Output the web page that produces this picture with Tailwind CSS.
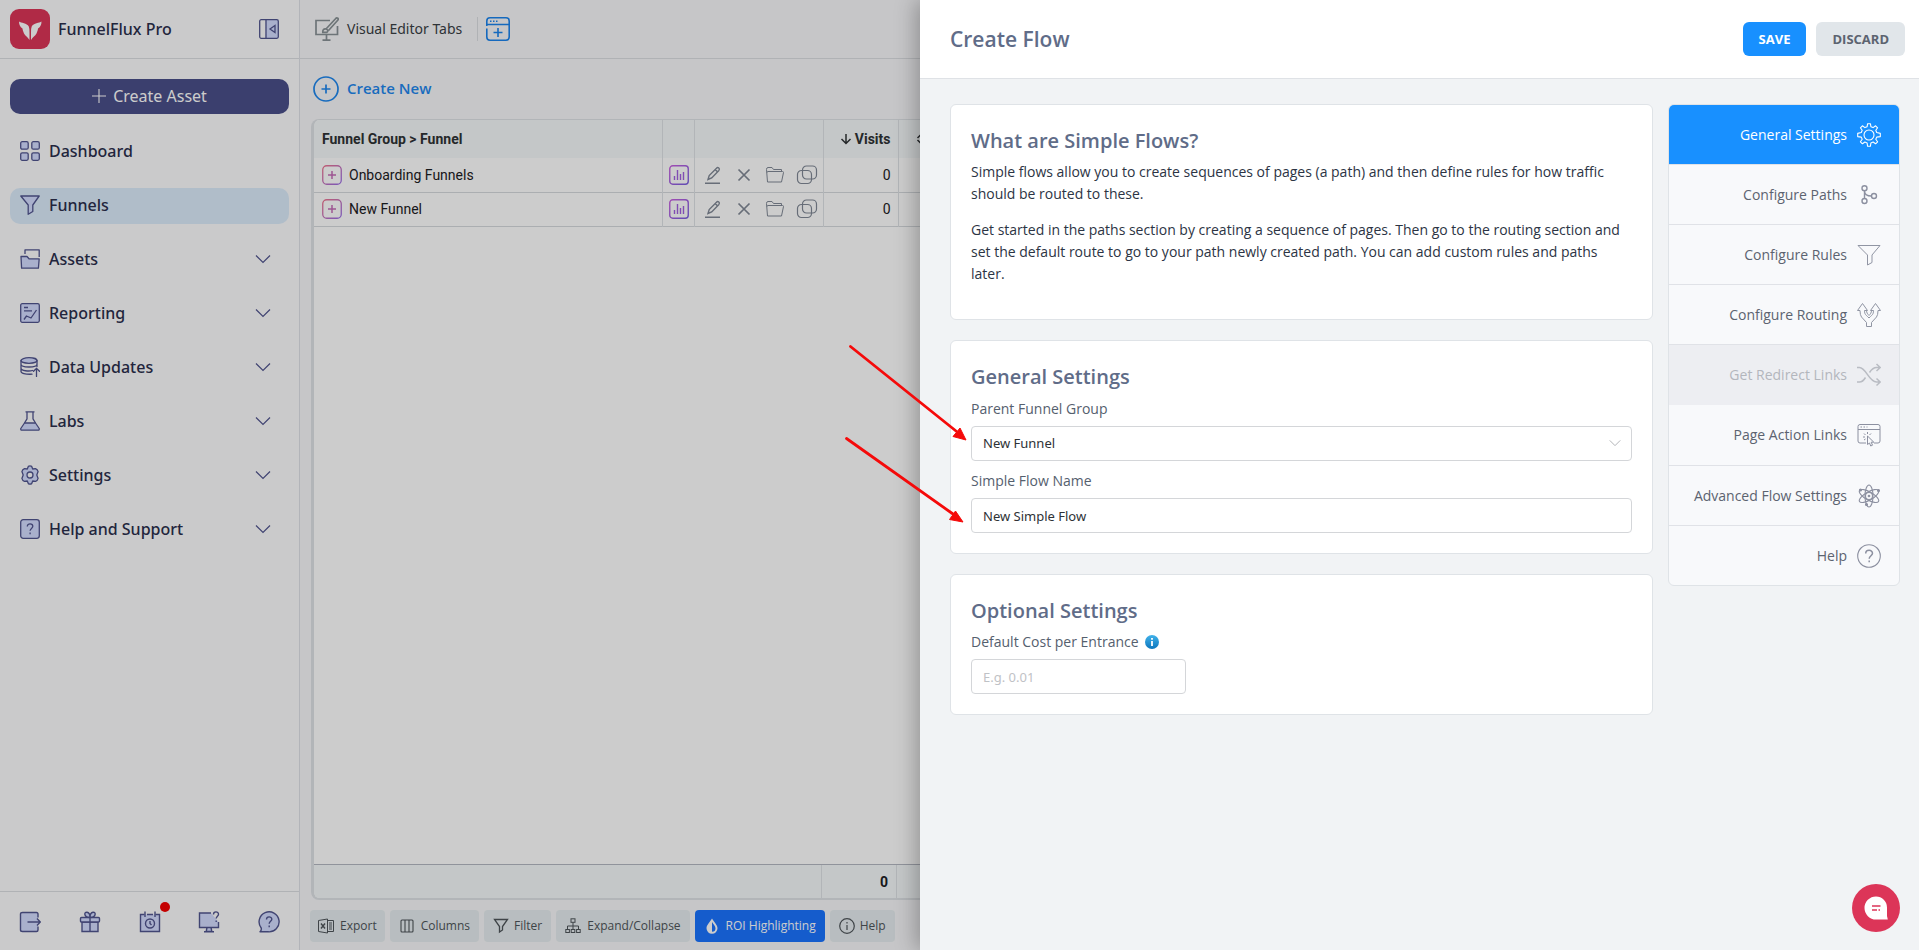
<!DOCTYPE html>
<html lang="en">
<head>
<meta charset="utf-8">
<title>FunnelFlux Pro – Create Flow</title>
<script src="https://cdn.jsdelivr.net/npm/@tailwindcss/browser@4"></script>
</head>
<body class="relative flex h-screen overflow-hidden bg-[#f8f8fa] font-['Open_Sans',sans-serif] text-sm">

<!-- Shared icon symbols -->
<svg class="absolute size-0" aria-hidden="true">
  <symbol id="chev" viewBox="0 0 16 16"><path d="M1 4.5l7 7 7-7" fill="none" stroke="currentColor" stroke-width="1.2"/></symbol>
  <linearGradient id="pink" x1="0" y1="0" x2="1" y2="1"><stop offset="0" stop-color="#f0758f"/><stop offset="1" stop-color="#9a6fe8"/></linearGradient>
  <linearGradient id="violet" x1="0" y1="0" x2="1" y2="1"><stop offset="0" stop-color="#c961e0"/><stop offset="1" stop-color="#7a60e0"/></linearGradient>
  <symbol id="plusbox" viewBox="0 0 20 20"><rect x=".75" y=".75" width="18.500" height="18.500" rx="4" fill="none" stroke="url(#pink)" stroke-width="1.3"/><path d="M10 6v8M6 10h8" stroke="#c66cb8" stroke-width="1.5"/></symbol>
  <symbol id="chart" viewBox="0 0 20 20"><rect x=".75" y=".75" width="18.500" height="18.500" rx="3" fill="none" stroke="url(#violet)" stroke-width="1.400"/><path d="M5.500 15v-4M8.500 15V5M11.500 15V9M14.500 15V7" stroke="#a261e0" stroke-width="1.400"/></symbol>
  <symbol id="edit" viewBox="0 0 20 20"><path d="M2 18.300h15" stroke="currentColor" stroke-width="1.400"/><path d="M5 14.500l1.200-4L13.500 3.200a1.600 1.600 0 012.400 2.200L8.700 12.900zM12.200 4.600l2.400 2.300" fill="none" stroke="currentColor" stroke-width="1.400"/></symbol>
  <symbol id="cross" viewBox="0 0 20 20"><path d="M4.500 4.500l11 11M15.500 4.500l-11 11" stroke="currentColor" stroke-width="1.700"/></symbol>
  <symbol id="folder" viewBox="0 0 20 20"><path d="M2.500 17L1.500 4.500q0-2 1.500-2h4l1.500 2h8v2M2.500 17h14l2-9.500q0-1-1-1H3q-1 0-1 1" fill="none" stroke="currentColor" stroke-width="1"/></symbol>
  <symbol id="copy" viewBox="0 0 22 20"><rect x="6.500" y="1" width="14" height="13" rx="4" fill="none" stroke="currentColor" stroke-width="1.200"/><rect x="1.500" y="5.500" width="14" height="13" rx="4" fill="none" stroke="currentColor" stroke-width="1.200"/></symbol>
</svg>

<aside class="flex w-[300px] shrink-0 flex-col border-r border-[#dfe1e8] bg-[#fdfdfe] font-['Noto_Sans',sans-serif] text-base font-medium text-[#2b2f4d]">
  <header class="flex h-[59px] shrink-0 items-center border-b border-[#dcdfe3] pr-5 pl-2.5">
    <svg class="size-10" viewBox="0 0 40 40"><rect width="40" height="40" rx="9" fill="#dc3558"/><path d="M9 12.500c2 1.500 8 1.500 9.800 5q.7 1.500.7 6V31c-2-3-4-4-5.500-6.500C13 22 12.500 20.500 12.500 19.500 10 18 9 15.500 9 12.500zM31.500 12.500c-2 1.500-8 1.500-9.800 5q-.7 1.500-.7 6V31c2-3 4-4 5.500-6.500 1-2.500 1.500-4 1.500-5 2.500-1.500 3.500-4 3.500-7z" fill="#fff"/></svg>
    <span class="ml-2 flex-1 font-medium">FunnelFlux Pro</span>
    <button type="button" aria-label="Collapse sidebar"><svg class="block size-5" viewBox="0 0 20 20" fill="none" stroke="#51558f" stroke-width="1.300"><rect x="6.500" y=".7" width="12.800" height="18.600" fill="#d4dcff" stroke="none"/><rect x=".7" y=".7" width="18.600" height="18.600" rx="1.500"/><path d="M7 1v18M16 6.500v7l-5-3.500z"/></svg></button>
  </header>
  <div class="px-2.5 pt-5">
    <button type="button" class="flex h-[35px] w-full items-center justify-center gap-[7px] rounded-[10px] bg-[#4a4f8a] pb-0.5 font-normal text-white"><svg class="size-3.5" viewBox="0 0 14 14"><path d="M7 0v14M0 7h14" stroke="#fff" stroke-width="1.100"/></svg>Create Asset</button>
  </div>
  <nav class="flex flex-1 flex-col gap-[18px] px-2.5 pt-5">
    <a href="#" class="flex h-9 items-center gap-[9px] rounded-[10px] px-2.5 pb-0.5">
      <svg class="size-5" viewBox="0 0 20 20" fill="#d4dcff" stroke="#51558f" stroke-width="1.300"><rect x=".7" y=".7" width="7.500" height="7.500" rx="1.500"/><rect x="11.800" y=".7" width="7.500" height="7.500" rx="1.500"/><rect x=".7" y="11.800" width="7.500" height="7.500" rx="1.500"/><rect x="11.800" y="11.800" width="7.500" height="7.500" rx="1.500"/></svg>Dashboard</a>
    <a href="#" class="flex h-9 items-center gap-[9px] rounded-[10px] bg-[#ddedfc] px-2.5 pb-0.5">
      <svg class="size-5" viewBox="0 0 20 20" fill="#d4dcff" stroke="#51558f" stroke-width="1.300" stroke-linejoin="round"><path d="M.8 1h18.400l-6.400 9v6.500L8.200 19.300V10z"/></svg>Funnels</a>
    <a href="#" class="flex h-9 items-center gap-[9px] rounded-[10px] pr-[18px] pb-0.5 pl-2.5">
      <svg class="size-5" viewBox="0 0 20 20" fill="none" stroke="#51558f" stroke-width="1.300" stroke-linejoin="round"><path d="M5 5V.8h14.200V8"/><path d="M1 7.500h6l2 2.300h10.200l-.8 9.400H1.600z" fill="#d4dcff"/></svg><span class="flex-1">Assets</span><svg class="size-4 text-[#51558f]"><use href="#chev"/></svg></a>
    <a href="#" class="flex h-9 items-center gap-[9px] rounded-[10px] pr-[18px] pb-0.5 pl-2.5">
      <svg class="size-5" viewBox="0 0 20 20" fill="none" stroke="#51558f" stroke-width="1.300" stroke-linejoin="round"><rect x=".7" y=".7" width="18.600" height="18.600" rx="1.500" fill="#d4dcff"/><path d="M4 4.500h4M4 7.800h8M4 16.500l2.500-3.500 4.500 2 5.500-8"/></svg><span class="flex-1">Reporting</span><svg class="size-4 text-[#51558f]"><use href="#chev"/></svg></a>
    <a href="#" class="flex h-9 items-center gap-[9px] rounded-[10px] pr-[18px] pb-0.5 pl-2.5">
      <svg class="size-5" viewBox="0 0 20 20" fill="none" stroke="#51558f" stroke-width="1.300" stroke-linecap="round"><ellipse cx="9" cy="3.500" rx="8" ry="2.800" fill="#d4dcff"/><path d="M1 3.500v11c0 1.700 4 3 11 2.700M17 3.500v6M1 7.200c0 3.700 16 3.700 16 0M1 11c0 3 8 3.500 11.500 2.500M16.500 19.500v-8M13.500 14.300l3-3 3 3"/></svg><span class="flex-1">Data Updates</span><svg class="size-4 text-[#51558f]"><use href="#chev"/></svg></a>
    <a href="#" class="flex h-9 items-center gap-[9px] rounded-[10px] pr-[18px] pb-0.5 pl-2.5">
      <svg class="size-5" viewBox="0 0 20 20" fill="none" stroke="#51558f" stroke-width="1.300" stroke-linejoin="round"><path d="M4.500 12h11l3.700 5.500q.4 1.700-1.200 1.700H2Q.400 19.200.800 17.500z" fill="#d4dcff"/><path d="M5.500.8h9M7 .8v7L4.500 12M13 .8v7l2.500 4.200"/></svg><span class="flex-1">Labs</span><svg class="size-4 text-[#51558f]"><use href="#chev"/></svg></a>
    <a href="#" class="flex h-9 items-center gap-[9px] rounded-[10px] pr-[18px] pb-0.5 pl-2.5">
      <svg class="size-5" viewBox="0 0 20 20" fill="#d4dcff" stroke="#51558f" stroke-width="1.300" stroke-linejoin="round"><path d="M8.300 1.400q1.700-1 3.400 0l1 2.600 2.800-.4q2 .6 2.600 3L16.800 10l1.300 3.400q-.6 2.400-2.600 3l-2.800-.4-1 2.600q-1.700 1-3.400 0l-1-2.600-2.800.4q-2-.6-2.600-3L3.200 10 1.900 6.600q.6-2.400 2.600-3l2.800.4z"/><circle cx="10" cy="10" r="3" fill="#fdfdfe"/></svg><span class="flex-1">Settings</span><svg class="size-4 text-[#51558f]"><use href="#chev"/></svg></a>
    <a href="#" class="flex h-9 items-center gap-[9px] rounded-[10px] pr-[18px] pb-0.5 pl-2.5">
      <svg class="size-5" viewBox="0 0 20 20" fill="none" stroke="#51558f" stroke-width="1.300"><rect x=".7" y=".7" width="18.600" height="18.600" rx="2.500" fill="#d4dcff"/><path d="M7.300 7.500c0-3.700 5.500-3.300 5.500-.2 0 2-2.700 2.200-2.700 4.400M10.100 13.500v1.800"/></svg><span class="flex-1">Help and Support</span><svg class="size-4 text-[#51558f]"><use href="#chev"/></svg></a>
  </nav>
  <footer class="flex h-[59px] shrink-0 items-center justify-between border-t border-[#dcdfe3] px-[19px] pt-0.5">
    <button type="button" aria-label="Log out"><svg class="block size-[22px]" viewBox="0 0 22 22" fill="#d4dcff" stroke="#51558f" stroke-width="1.400"><path d="M19 6.500V3q0-1.500-1.500-1.500h-14Q1.500 1.500 1.500 3v16q0 1.500 2 1.500h14Q19 20.500 19 19v-3.500"/><path d="M8.500 11H21M18 7.500l3.300 3.500-3.300 3.500" fill="none"/></svg></button>
    <button type="button" aria-label="Rewards"><svg class="block size-[22px]" viewBox="0 0 22 22" fill="#d4dcff" stroke="#51558f" stroke-width="1.400"><path d="M3 11h16v9.500H3z"/><rect x="1.500" y="6.500" width="19" height="4.500" rx="1"/><path d="M11 6.500v14M11 6.500C5 6.500 4.500 1 8 1.200 10 1.500 11 4 11 6.500c0-2.500 1-5 3-5.300 3.500-.2 3 5.300-3 5.300z"/></svg></button>
    <button type="button" aria-label="Scheduled" class="relative"><svg class="block size-[22px]" viewBox="0 0 22 22" fill="#d4dcff" stroke="#51558f" stroke-width="1.400"><path d="M5.500 3.500h-4v17h19v-17h-4"/><path d="M8 3.500h6M6 .5V6M16 .5V6" fill="none"/><circle cx="11" cy="12.500" r="4.500"/><path d="M11 10v2.500l1.500 1.500" fill="none"/></svg><span class="absolute -top-[9px] -right-[9px] size-2.5 rounded-full bg-[#f50000]"></span></button>
    <button type="button" aria-label="Remote help"><svg class="block size-[22px]" viewBox="0 0 22 22" fill="#d4dcff" stroke="#51558f" stroke-width="1.400"><path d="M13 2H1.500v14.500h19V11M9 16.500l-.8 4h5.600l-.8-4M6 20.700h10"/><path d="M15.500 3.500c0-3.500 5-3.300 5-.3 0 2-2.300 2-2.300 4.300M18.200 9.500V11" fill="none"/></svg></button>
    <button type="button" aria-label="Support chat"><svg class="block size-[22px]" viewBox="0 0 22 22" fill="#d4dcff" stroke="#51558f" stroke-width="1.400"><path d="M2 20.800q1.800-1.800 1.200-3.800A10 10 0 1110 20.800z" stroke-linejoin="round"/><path d="M8.500 8.500c0-3.600 5.300-3.400 5.300-.3 0 2-2.600 2.300-2.600 4.500M11.200 14.500v1.800" fill="none"/></svg></button>
  </footer>
</aside>

<main class="flex min-w-0 flex-1 flex-col overflow-hidden">
  <header class="flex h-[59px] shrink-0 items-center border-b border-[#dcdfe3] pl-[15px] text-[#3a4045]">
    <svg class="size-6" viewBox="0 0 24 24" fill="none" stroke="#899296" stroke-width="1.700"><path d="M15 3.500H1v14h21.500V9M11.500 17.500v5.500M7.500 23.200h8"/><path d="M11 12L20.500 1.800q1-1.300 2.300-.6 1 1-.3 2.300L13.500 13.500M11 12q-3.500-.5-3.200 3.300h4q2.500-2-.8-3.300z"/></svg>
    <span class="ml-2 font-['Noto_Sans',sans-serif] text-sm">Visual Editor Tabs</span>
    <span class="ml-[15px] h-6 w-px bg-[#dcdfe3]"></span>
    <button type="button" aria-label="New tab" class="ml-2"><svg class="block size-6" viewBox="0 0 24 24" fill="none" stroke="#1b84ee" stroke-width="1.600"><path d="M.8 9V4Q.800.800 4 .8h16q3.200 0 3.200 3.200v16q0 3.200-3.200 3.200H4Q.800 23.200.800 20v-8.500M.8 7.500h22.400M12 11v9M7.500 15.500h9M4 4.200h1.500M7 4.200h1.500M10 4.200h1.500"/></svg></button>
  </header>
  <div class="flex h-[60px] shrink-0 items-center pl-[13px]">
    <button type="button" class="flex items-center gap-2 text-[15px] font-semibold text-[#1f87ee]"><svg class="size-[26px]" viewBox="0 0 26 26" fill="none" stroke="currentColor" stroke-width="1.700"><circle cx="13" cy="13" r="12"/><path d="M13 8.500v9M8.500 13h9"/></svg>Create New</button>
  </div>
  <section class="ml-[11px] flex min-h-0 flex-1 flex-col overflow-hidden rounded-lg border-t border-b-2 border-l-3 border-[#dfe3e7] bg-white font-['Roboto',sans-serif] text-sm text-[#1c2024]">
    <table class="w-full table-fixed border-collapse">
      <colgroup><col class="w-[348px]"><col class="w-8"><col class="w-[129px]"><col class="w-[75px]"><col></colgroup>
      <thead>
        <tr class="h-[38px] bg-[#f6f9fa] text-[#2f3335]">
          <th class="border-r border-[#dfe3e7] p-0 pl-2 text-left">Funnel Group &gt; Funnel</th>
          <th class="border-r border-[#dfe3e7]"></th>
          <th class="border-r border-[#dfe3e7]"></th>
          <th class="border-r border-[#dfe3e7] p-0 pr-[7px] text-right"><span class="inline-flex items-center gap-[3px]"><svg class="size-3" viewBox="0 0 12 12" fill="none" stroke="currentColor" stroke-width="1.500"><path d="M6 1v9.500M1.500 6L6 10.500 10.500 6"/></svg>Visits</span></th>
          <th class="p-0 pl-[17px] text-left"><svg class="size-3" viewBox="0 0 12 12" fill="none" stroke="currentColor" stroke-width="1.500"><path d="M1.500 5l3-3 3 3M1.500 7l3 3 3-3"/></svg></th>
        </tr>
      </thead>
      <tbody>
        <tr class="h-[34px] border-b border-[#d6dade]">
          <td class="border-r border-[#dfe3e7] p-0 pl-2"><span class="flex items-center gap-[7px]"><button type="button" aria-label="Expand"><svg class="block size-5"><use href="#plusbox"/></svg></button>Onboarding Funnels</span></td>
          <td class="border-r border-[#dfe3e7] p-0 pl-1.5"><button type="button" aria-label="Report" class="block"><svg class="block size-5"><use href="#chart"/></svg></button></td>
          <td class="border-r border-[#dfe3e7] p-0 pl-2 text-[#818996]"><span class="flex items-center gap-[11px]"><button type="button" aria-label="Edit"><svg class="block size-5"><use href="#edit"/></svg></button><button type="button" aria-label="Delete"><svg class="block size-5"><use href="#cross"/></svg></button><button type="button" aria-label="Open folder"><svg class="block size-5"><use href="#folder"/></svg></button><button type="button" aria-label="Duplicate"><svg class="block h-5 w-[22px]"><use href="#copy"/></svg></button></span></td>
          <td class="border-r border-[#dfe3e7] p-0 pr-[7px] text-right">0</td><td></td>
        </tr>
        <tr class="h-[34px] border-b border-[#d6dade]">
          <td class="border-r border-[#dfe3e7] p-0 pl-2"><span class="flex items-center gap-[7px]"><button type="button" aria-label="Expand"><svg class="block size-5"><use href="#plusbox"/></svg></button>New Funnel</span></td>
          <td class="border-r border-[#dfe3e7] p-0 pl-1.5"><button type="button" aria-label="Report" class="block"><svg class="block size-5"><use href="#chart"/></svg></button></td>
          <td class="border-r border-[#dfe3e7] p-0 pl-2 text-[#818996]"><span class="flex items-center gap-[11px]"><button type="button" aria-label="Edit"><svg class="block size-5"><use href="#edit"/></svg></button><button type="button" aria-label="Delete"><svg class="block size-5"><use href="#cross"/></svg></button><button type="button" aria-label="Open folder"><svg class="block size-5"><use href="#folder"/></svg></button><button type="button" aria-label="Duplicate"><svg class="block h-5 w-[22px]"><use href="#copy"/></svg></button></span></td>
          <td class="border-r border-[#dfe3e7] p-0 pr-[7px] text-right">0</td><td></td>
        </tr>
      </tbody>
    </table>
    <div class="flex-1"></div>
    <div class="flex h-[34px] shrink-0 items-stretch border-t border-[#b4b8c2] bg-[#f6f9fa] font-bold">
      <span class="w-[508px] border-r border-[#dfe3e7]"></span>
      <span class="flex w-[75px] items-center justify-end border-r border-[#dfe3e7] pr-2">0</span>
    </div>
  </section>
  <div class="flex shrink-0 gap-[5px] pt-2.5 pb-2 pl-2.5 text-xs text-[#4f555a]">
    <button type="button" class="flex h-8 items-center gap-1.5 rounded bg-[#e6edf0] px-2"><svg class="size-4" viewBox="0 0 16 16" fill="none" stroke="currentColor" stroke-width="1"><path d="M9.500 1L.500 2.500v11L9.500 15zM9.500 2.500h6v11h-6M11 5h3M11 7h3M11 9h3M11 11h3"/><path d="M3 5.500l4 5M7 5.500l-4 5" stroke-width="1.400"/></svg>Export</button>
    <button type="button" class="flex h-8 items-center gap-1.5 rounded bg-[#e6edf0] px-[9px]"><svg class="size-4" viewBox="0 0 16 16" fill="none" stroke="currentColor" stroke-width="1.100"><rect x="2" y="2" width="12" height="12" rx="1"/><path d="M6 2v12M10 2v12"/></svg>Columns</button>
    <button type="button" class="flex h-8 items-center gap-[5px] rounded bg-[#e6edf0] px-[9px]"><svg class="size-4" viewBox="0 0 16 16" fill="none" stroke="currentColor" stroke-width="1.300"><path d="M1.500 1.500h13L9.500 8.500V12L6.500 14V8.500z"/></svg>Filter</button>
    <button type="button" class="flex h-8 items-center gap-1.5 rounded bg-[#e6edf0] px-[9px]"><svg class="size-4" viewBox="0 0 16 16" fill="none" stroke="currentColor" stroke-width="1"><rect x="6" y=".8" width="4" height="3.500"/><path d="M8 4.500v7M2.500 11.500V8h11v3.500"/><rect x=".8" y="11.500" width="3.600" height="3"/><rect x="6.200" y="11.500" width="3.600" height="3"/><rect x="11.600" y="11.500" width="3.600" height="3"/></svg>Expand/Collapse</button>
    <button type="button" class="flex h-8 items-center gap-1.5 rounded bg-[#1b74ff] px-[9px] text-white"><svg class="size-4" viewBox="0 0 16 16"><path d="M8 .5C6 4 2.500 7 2.500 10.300a5.500 5.500 0 0011 0C13.500 7 10 4 8 .5z" fill="#fff"/><path d="M8 4c1.500 2.200 3.500 4.300 3.500 6.300A3.500 3.500 0 018 13.800z" fill="#1b74ff"/></svg>ROI Highlighting</button>
    <button type="button" class="flex h-8 items-center gap-[5px] rounded bg-[#e6edf0] px-[9px]"><svg class="size-4" viewBox="0 0 16 16" fill="none" stroke="currentColor" stroke-width="1.200"><circle cx="8" cy="8" r="7.300"/><path d="M8 7v5M8 4v1.500"/></svg>Help</button>
  </div>
</main>

<!-- Dimmed backdrop and drawer -->
<div class="absolute inset-0 bg-black/20"></div>
<section role="dialog" aria-labelledby="drawer-title" class="absolute inset-y-0 right-0 flex w-[999px] max-w-full flex-col bg-[#f1f3f5] shadow-[-4px_0_20px_rgba(0,0,0,0.28)]">
  <header class="flex h-[79px] shrink-0 items-center gap-2.5 border-b border-[#dfe2e6] bg-white pr-3.5 pl-[30px]">
    <h1 id="drawer-title" class="flex-1 text-[21px] font-semibold text-[#606c88]">Create Flow</h1>
    <button type="button" class="h-[34px] rounded-md bg-[#1890ff] px-4 text-[13px] font-bold text-white">SAVE</button>
    <button type="button" class="h-[34px] rounded-md bg-[#e1e6ea] px-4 text-[13px] font-bold text-[#5c6370]">DISCARD</button>
  </header>
  <div class="flex flex-1 items-start gap-[15px] overflow-hidden pt-[25px] pr-[19px] pl-[30px]">
    <div class="flex min-w-0 flex-1 flex-col gap-5">
      <section class="rounded-md border border-[#dfe3e7] bg-white px-5 pt-5 pb-[34px]">
        <h2 class="mb-1 text-xl leading-8 font-semibold text-[#606c88]">What are Simple Flows?</h2>
        <p class="text-sm leading-[22px] text-[#2c3444]">Simple flows allow you to create sequences of pages (a path) and then define rules for how traffic should be routed to these.</p>
        <p class="mt-3.5 text-sm leading-[22px] text-[#2c3444]">Get started in the paths section by creating a sequence of pages. Then go to the routing section and set the default route to go to your path newly created path. You can add custom rules and paths later.</p>
      </section>
      <section class="rounded-md border border-[#dfe3e7] bg-white p-5">
        <h2 class="text-xl leading-8 font-semibold text-[#606c88]">General Settings</h2>
        <label for="group" class="mt-1 block leading-6 text-[#55606e]">Parent Funnel Group</label>
        <div class="relative mt-[5px]">
          <select id="group" class="block h-[35px] w-full appearance-none rounded border border-[#d4d6d9] bg-white px-[11px] font-['Noto_Sans',sans-serif] text-[13px] text-[#2e3236]"><option>New Funnel</option></select>
          <svg class="pointer-events-none absolute top-[11px] right-[11px] size-3 text-[#a9acb0]"><use href="#chev"/></svg>
        </div>
        <label for="name" class="mt-2 block leading-6 text-[#55606e]">Simple Flow Name</label>
        <input id="name" type="text" value="New Simple Flow" class="mt-[5px] block h-[35px] w-full rounded border border-[#d4d6d9] bg-white px-[11px] font-['Noto_Sans',sans-serif] text-[13px] text-[#2e3236]">
      </section>
      <section class="rounded-md border border-[#dfe3e7] bg-white p-5">
        <h2 class="text-xl leading-8 font-semibold text-[#606c88]">Optional Settings</h2>
        <div class="flex items-center gap-1.5"><label for="cost" class="leading-[30px] text-[#55606e]">Default Cost per Entrance</label>
        <svg class="size-3.5" viewBox="0 0 14 14"><defs><linearGradient id="info" x1="0" y1="0" x2="0" y2="1"><stop offset="0" stop-color="#41b2ea"/><stop offset="1" stop-color="#0c76bd"/></linearGradient></defs><circle cx="7" cy="7" r="7" fill="url(#info)"/><path d="M7 6v5M7 3v1.800" stroke="#fff" stroke-width="1.800"/></svg></div>
        <input id="cost" type="text" placeholder="E.g. 0.01" class="mt-0.5 block h-[35px] w-[215px] rounded border border-[#d4d6d9] bg-white px-[11px] font-['Noto_Sans',sans-serif] text-[13px] placeholder:text-[#bfc2c6]">
      </section>
    </div>

    <nav class="flex w-[232px] shrink-0 flex-col overflow-hidden rounded-md border border-[#dfe3e7] bg-[#f8f9fb] text-sm text-[#5c6370]">
      <a href="#" class="flex h-[59px] items-center justify-end gap-2.5 bg-[#1890ff] pr-[18px] text-white">General Settings
        <svg class="size-6" viewBox="0 0 24 24" fill="none" stroke="currentColor" stroke-width="1.100" stroke-linejoin="round"><path d="M10.600 .7h2.800l.5 3 2.200.9 2.500-1.800 2 2-1.800 2.500.9 2.200 3.600.9v3.200l-3.600.5-.9 2.200 1.800 2.500-2 2-2.500-1.800-2.200.9-.5 3.400h-2.800l-.5-3.400-2.200-.9-2.500 1.800-2-2 1.800-2.500-.9-2.200L.700 13.600v-3.200l3.600-.9.900-2.200-1.800-2.500 2-2 2.500 1.800 2.200-.9z"/><circle cx="12" cy="12" r="5"/></svg></a>
      <a href="#" class="flex h-[60px] items-center justify-end gap-2.5 border-t border-[#e0e2e7] pr-[18px]">Configure Paths
        <svg class="size-6" viewBox="0 0 24 24" fill="none" stroke="#8c90a0" stroke-width="1.400"><circle cx="7.500" cy="5.200" r="2.500"/><circle cx="7.500" cy="18" r="2.500"/><circle cx="17" cy="13" r="2.500"/><path d="M7.500 7.700v7.800M7.500 7.700c0 3.500 2 5.300 7 5.300"/></svg></a>
      <a href="#" class="flex h-[60px] items-center justify-end gap-2.5 border-t border-[#e0e2e7] pr-[18px]">Configure Rules
        <svg class="size-6" viewBox="0 0 24 24" fill="none" stroke="#9095a3" stroke-width="1"><path d="M1 2.500h22l-8 9.500v7.500l-4.500 2.500V12z"/></svg></a>
      <a href="#" class="flex h-[60px] items-center justify-end gap-2.5 border-t border-[#e0e2e7] pr-[18px]">Configure Routing
        <svg class="size-6" viewBox="0 0 24 24" fill="none" stroke="#9095a3" stroke-width="1" stroke-linejoin="round"><path d="M9.500 23.500v-4L4.500 14Q3 12 3 7.500H.500L5.500.500l5 7H7.500c0 4 1.500 4.500 3 6l1.500 1.500 1.500-1.500c1.500-1.500 3-2 3-6h-3l5-7 5 7H21q0 4.500-1.500 6.500l-5 5.500v4zM9.500 7.500c0 2 1 3.500 2.500 5 1.500-1.500 2.500-3 2.500-5"/></svg></a>
      <a href="#" aria-disabled="true" class="flex h-[61px] items-center justify-end gap-2.5 border-t border-[#e0e2e7] bg-[#edeef2] pr-[18px] text-[#b3b6bd]">Get Redirect Links
        <svg class="size-6" viewBox="0 0 24 24" fill="none" stroke="#b9bcc3" stroke-width="1.500"><path d="M0 4.500h2.500C9 4.500 12 19 19.500 19H23M0 19h2.500c3 0 4.500-2 6-4.500M12.500 9.500c2-3 4-5 7-5H23M19.500 1l3.700 3.500L19.500 8M19.500 15.500l3.700 3.500-3.700 3.500"/></svg></a>
      <a href="#" class="flex h-[60px] items-center justify-end gap-2.5 pr-[18px]">Page Action Links
        <svg class="size-6" viewBox="0 0 24 24" fill="none" stroke="#8c90a0" stroke-width="1"><path d="M9 20H3q-2 0-2-2V3.500q0-2 2-2h18q2 0 2 2V18q0 2-2 2h-4M1 6.500h22M3.500 4h1.500M6.500 4H8M9.500 4h1"/><path d="M10.500 13v8.500l2-1.500 1.200 3 1.800-.8-1.300-3h2.600z"/><path d="M10.500 9v2M7 10.500l1.500 1.500M14 10.500L12.500 12M6 14h2M7 17l1.500-1"/></svg></a>
      <a href="#" class="flex h-[60px] items-center justify-end gap-2.5 border-t border-[#e0e2e7] pr-[18px]">Advanced Flow Settings
        <svg class="size-6" viewBox="0 0 24 24" fill="none" stroke="#8c90a0" stroke-width="1.100"><ellipse cx="12" cy="12" rx="4" ry="11"/><ellipse cx="12" cy="12" rx="4" ry="11" transform="rotate(60 12 12)"/><ellipse cx="12" cy="12" rx="4" ry="11" transform="rotate(120 12 12)"/><circle cx="12" cy="12" r="3.500"/><circle cx="12" cy="12" r=".8"/><circle cx="3.500" cy="6" r="1" fill="#8c90a0"/><circle cx="21.500" cy="6.500" r="1" fill="#8c90a0"/><circle cx="9.500" cy="20.500" r="1" fill="#8c90a0"/></svg></a>
      <a href="#" class="flex h-[60px] items-center justify-end gap-2.5 border-t border-[#e0e2e7] pr-[18px]">Help
        <svg class="size-6" viewBox="0 0 24 24" fill="none" stroke="#8c90a0" stroke-width="1.100"><circle cx="12" cy="12" r="11.300"/><path d="M8.700 9.500c0-4.300 6.800-4.100 6.800-.3 0 2.300-3.300 2.800-3.300 5.600M12.200 16.500v1.800" stroke-width="1.500"/></svg></a>
    </nav>
  </div>
  <button type="button" aria-label="Open chat" class="absolute right-[19px] bottom-[18px] flex size-12 items-center justify-center rounded-full bg-[#dc3558]"><svg class="size-6" viewBox="0 0 24 24"><path d="M12 .5a11 11 0 0111 11V20l.8 3.500H12A11.500 11.500 0 0112 .5z" fill="#fff"/><path d="M8 10h8.500M8 14h5M14.500 14h1.500" stroke="#dc3558" stroke-width="1.300"/></svg></button>
</section>

<!-- Annotation arrows -->
<svg class="pointer-events-none absolute top-[340px] left-[840px] h-[190px] w-[135px]" viewBox="0 0 135 190" fill="#f50a0a" stroke="#f50a0a"><path d="M10.500 6.500L116 91M6.500 98.500L113 174" stroke-width="2.800" stroke-linecap="round"/><path d="M126 100l-13-3.500 7-8.500zM123 182l-13.500-2.500 6-8.500z" stroke-width="1"/></svg>
</body>
</html>
